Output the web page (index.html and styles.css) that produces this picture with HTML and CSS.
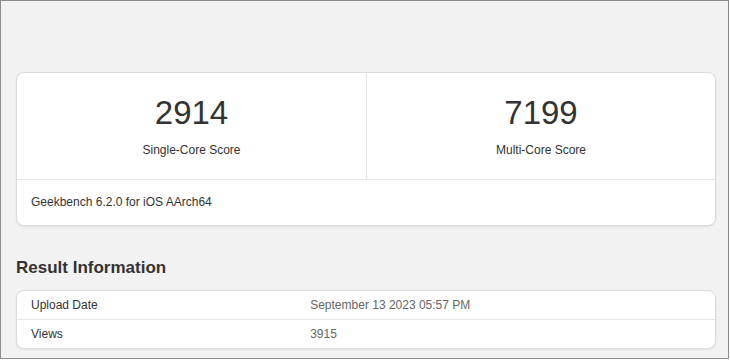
FILE: index.html
```html
<!DOCTYPE html>
<html lang="en">
<head>
    <meta charset="UTF-8">
    <meta name="viewport" content="width=device-width, initial-scale=1.0">
    <title>Geekbench Result</title>
    <link rel="stylesheet" href="styles.css">
</head>
<body>

    <div class="page">
        <div class="card">
            <div class="scores">
                <div class="score">
                    <div class="score-value">2914</div>
                    <div class="score-name">Single-Core Score</div>
                </div>
                <div class="score">
                    <div class="score-value">7199</div>
                    <div class="score-name">Multi-Core Score</div>
                </div>
            </div>
            <div class="card-footer">Geekbench 6.2.0 for iOS AArch64</div>
        </div>

        <h2>Result Information</h2>
        <div class="card">
            <table class="info">
                <tr>
                    <td class="name">Upload Date</td>
                    <td class="value">September 13 2023 05:57 PM</td>
                </tr>
                <tr>
                    <td class="name">Views</td>
                    <td class="value">3915</td>
                </tr>
            </table>
        </div>
    </div>

</body>
</html>
```

FILE: styles.css
```css
* {
    box-sizing: border-box;
}

body {
    font-family: "Liberation Sans", Arial, sans-serif;
    margin: 0;
    padding: 0;
    color: #333;
}

.page {
    width: 729px;
    height: 359px;
    padding: 71px 12px 0 15px;
    background-color: #f2f2f2;
    border: 1px solid #8c8c8c;
    overflow: hidden;
}

.card {
    background-color: white;
    border: 1px solid #dcdcdc;
    border-radius: 8px;
    box-shadow: 0 1px 2px rgba(0, 0, 0, 0.08);
    overflow: hidden;
}

.scores {
    display: grid;
    grid-template-columns: 1fr 1fr;
}

.score {
    text-align: center;
    padding: 20px 0 20px;
}

.score + .score {
    border-left: 1px solid #e6e6e6;
}

.score-value {
    font-size: 33px;
    line-height: 40px;
}

.score-name {
    font-size: 12px;
    line-height: 17px;
    margin-top: 9px;
}

.card-footer {
    border-top: 1px solid #e6e6e6;
    padding: 14px 14px 14px;
    font-size: 12px;
    line-height: 17px;
}

h2 {
    font-size: 17px;
    line-height: 22px;
    margin: 31px 0 11px;
    color: #333;
}

.info {
    width: 100%;
    border-collapse: collapse;
    font-size: 12px;
}

.info td {
    padding: 5px 14px;
    line-height: 18px;
}

.info tr + tr td {
    border-top: 1px solid #e6e6e6;
}

.info .name {
    width: 40%;
}

.info .value {
    color: #666;
}
```
